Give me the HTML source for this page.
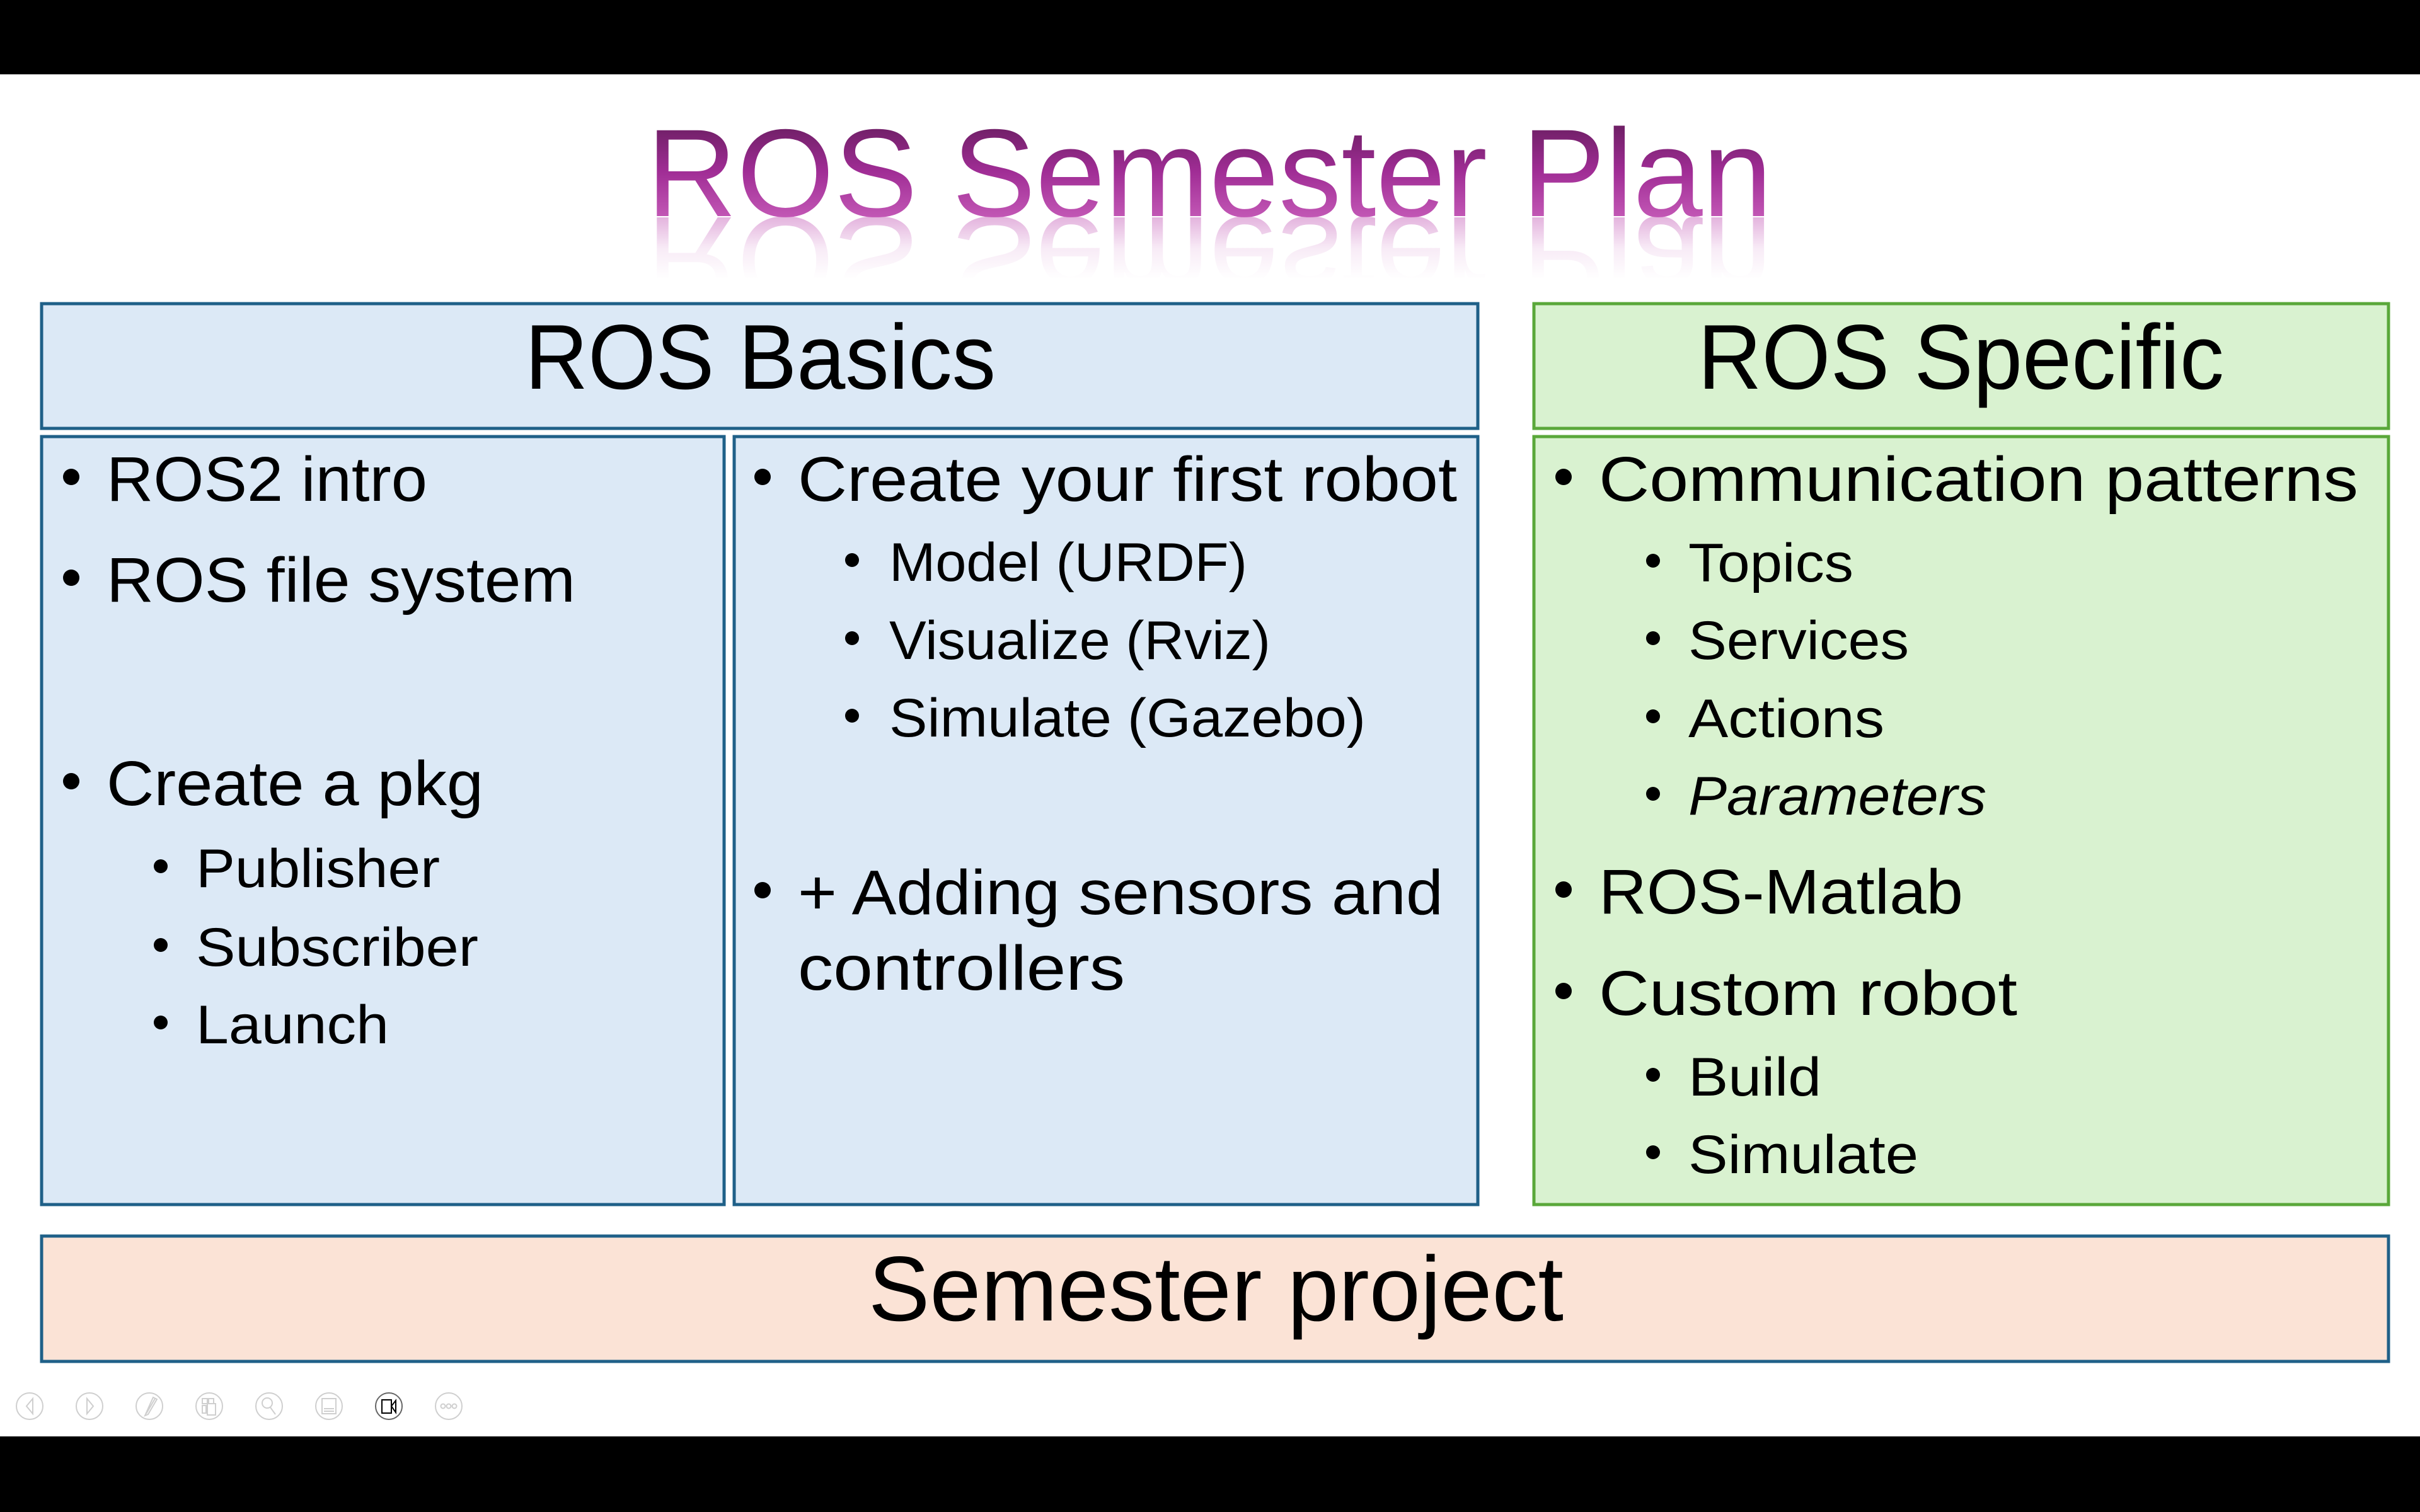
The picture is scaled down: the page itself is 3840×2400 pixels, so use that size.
<!DOCTYPE html>
<html><head><meta charset="utf-8"><style>
html,body{margin:0;padding:0;background:#fff;width:3840px;height:2400px;overflow:hidden}
svg{display:block}
text{font-family:"Liberation Sans",sans-serif;fill:#000}
</style></head><body>
<svg width="3840" height="2400" viewBox="0 0 3840 2400" xmlns="http://www.w3.org/2000/svg">
<defs>
<linearGradient id="tg" x1="0" y1="200" x2="0" y2="345" gradientUnits="userSpaceOnUse">
<stop offset="0" stop-color="#6f1f66"/><stop offset="0.5" stop-color="#a02d95"/><stop offset="1" stop-color="#c257b5"/>
</linearGradient>
<linearGradient id="rg" x1="0" y1="343" x2="0" y2="245" gradientUnits="userSpaceOnUse">
<stop offset="0" stop-color="#c257b5" stop-opacity="0.45"/><stop offset="0.5" stop-color="#c257b5" stop-opacity="0.12"/><stop offset="1" stop-color="#c257b5" stop-opacity="0"/>
</linearGradient>
</defs>
<rect x="0" y="0" width="3840" height="118" fill="#000"/>
<rect x="0" y="2280" width="3840" height="120" fill="#000"/>

<!-- title -->
<text x="1026" y="343" font-size="198" textLength="1786" lengthAdjust="spacingAndGlyphs" style="fill:url(#tg)">ROS Semester Plan</text>
<g transform="translate(0,688) scale(1,-1)">
<text x="1026" y="343" font-size="198" textLength="1786" lengthAdjust="spacingAndGlyphs" style="fill:url(#rg)">ROS Semester Plan</text>
</g>

<!-- boxes -->
<g stroke-width="5">
<rect x="66" y="482" width="2279" height="198" fill="#dce9f6" stroke="#1f6088"/>
<rect x="2434" y="482" width="1356" height="198" fill="#d9f2d0" stroke="#5aa83a"/>
<rect x="66" y="693" width="1083" height="1219" fill="#dce9f6" stroke="#1f6088"/>
<rect x="1165" y="693" width="1180" height="1219" fill="#dce9f6" stroke="#1f6088"/>
<rect x="2434" y="693" width="1356" height="1219" fill="#d9f2d0" stroke="#5aa83a"/>
<rect x="66" y="1962" width="3724" height="199" fill="#fbe3d6" stroke="#1f6088"/>
</g>

<text x="833" y="617" font-size="146" textLength="747" lengthAdjust="spacingAndGlyphs">ROS Basics</text>
<text x="2694" y="617" font-size="146" textLength="835" lengthAdjust="spacingAndGlyphs">ROS Specific</text>
<text x="1378" y="2096" font-size="146" textLength="1103" lengthAdjust="spacingAndGlyphs">Semester project</text>

<!-- left col -->
<g>
<circle cx="113" cy="757" r="13"/><text x="169" y="795" font-size="100" textLength="509" lengthAdjust="spacingAndGlyphs">ROS2 intro</text>
<circle cx="113" cy="917" r="13"/><text x="169" y="955" font-size="100" textLength="744" lengthAdjust="spacingAndGlyphs">ROS file system</text>
<circle cx="113" cy="1240" r="13"/><text x="169" y="1278" font-size="100" textLength="598" lengthAdjust="spacingAndGlyphs">Create a pkg</text>
<circle cx="255" cy="1375" r="11"/><text x="311" y="1408" font-size="86" textLength="387" lengthAdjust="spacingAndGlyphs">Publisher</text>
<circle cx="255" cy="1500" r="11"/><text x="311" y="1533" font-size="86" textLength="448" lengthAdjust="spacingAndGlyphs">Subscriber</text>
<circle cx="255" cy="1623" r="11"/><text x="311" y="1656" font-size="86" textLength="306" lengthAdjust="spacingAndGlyphs">Launch</text>
</g>

<!-- mid col -->
<g>
<circle cx="1210" cy="757" r="13"/><text x="1266" y="795" font-size="100" textLength="1046" lengthAdjust="spacingAndGlyphs">Create your first robot</text>
<circle cx="1352" cy="889" r="11"/><text x="1411" y="922" font-size="86" textLength="568" lengthAdjust="spacingAndGlyphs">Model (URDF)</text>
<circle cx="1352" cy="1013" r="11"/><text x="1411" y="1046" font-size="86" textLength="605" lengthAdjust="spacingAndGlyphs">Visualize (Rviz)</text>
<circle cx="1352" cy="1136" r="11"/><text x="1411" y="1169" font-size="86" textLength="756" lengthAdjust="spacingAndGlyphs">Simulate (Gazebo)</text>
<circle cx="1210" cy="1413" r="13"/><text x="1266" y="1451" font-size="100" textLength="1024" lengthAdjust="spacingAndGlyphs">+ Adding sensors and</text>
<text x="1266" y="1571" font-size="100" textLength="519" lengthAdjust="spacingAndGlyphs">controllers</text>
</g>

<!-- right col -->
<g>
<circle cx="2481" cy="757" r="13"/><text x="2537" y="795" font-size="100" textLength="1205" lengthAdjust="spacingAndGlyphs">Communication patterns</text>
<circle cx="2623" cy="890" r="11"/><text x="2679" y="923" font-size="86" textLength="262" lengthAdjust="spacingAndGlyphs">Topics</text>
<circle cx="2623" cy="1013" r="11"/><text x="2679" y="1046" font-size="86" textLength="350" lengthAdjust="spacingAndGlyphs">Services</text>
<circle cx="2623" cy="1137" r="11"/><text x="2679" y="1170" font-size="86" textLength="311" lengthAdjust="spacingAndGlyphs">Actions</text>
<circle cx="2623" cy="1260" r="11"/><text x="2679" y="1293" font-size="86" font-style="italic" textLength="473" lengthAdjust="spacingAndGlyphs">Parameters</text>
<circle cx="2481" cy="1412" r="13"/><text x="2537" y="1450" font-size="100" textLength="578" lengthAdjust="spacingAndGlyphs">ROS-Matlab</text>
<circle cx="2481" cy="1573" r="13"/><text x="2537" y="1611" font-size="100" textLength="664" lengthAdjust="spacingAndGlyphs">Custom robot</text>
<circle cx="2623" cy="1706" r="11"/><text x="2679" y="1739" font-size="86" textLength="211" lengthAdjust="spacingAndGlyphs">Build</text>
<circle cx="2623" cy="1829" r="11"/><text x="2679" y="1862" font-size="86" textLength="365" lengthAdjust="spacingAndGlyphs">Simulate</text>
</g>

<!-- toolbar icons -->
<g fill="none" stroke="#cfcfcf" stroke-width="2">
<circle cx="47" cy="2232" r="21"/><path d="M52 2220 L42 2232 L52 2244 Z"/>
<circle cx="142" cy="2232" r="21"/><path d="M138 2220 L148 2232 L138 2244 Z"/>
<circle cx="237" cy="2232" r="21"/><path d="M246 2220 L232 2244 M243 2218 L249 2221 L235 2245 L230 2247 Z"/>
<circle cx="332" cy="2232" r="21"/><rect x="321" y="2220" width="8" height="8"/><rect x="331" y="2220" width="8" height="8"/><rect x="321" y="2231" width="6" height="12"/><rect x="329" y="2228" width="13" height="18"/>
<circle cx="427" cy="2232" r="21"/><circle cx="424" cy="2227" r="8"/><path d="M429 2234 L437 2245"/>
<circle cx="522" cy="2232" r="21"/><rect x="511" y="2220" width="22" height="24"/><path d="M514 2236 H530 M514 2240 H530"/>
<circle cx="712" cy="2232" r="21"/><circle cx="703" cy="2232" r="3.5"/><circle cx="712" cy="2232" r="3.5"/><circle cx="721" cy="2232" r="3.5"/>
</g>
<circle cx="617" cy="2232" r="21" fill="none" stroke="#666" stroke-width="2"/>
<g fill="none" stroke="#000" stroke-width="2">
<rect x="606" y="2222" width="15" height="21"/><path d="M621 2232 L628 2223 V2242 Z"/>
</g>
</svg>
</body></html>
